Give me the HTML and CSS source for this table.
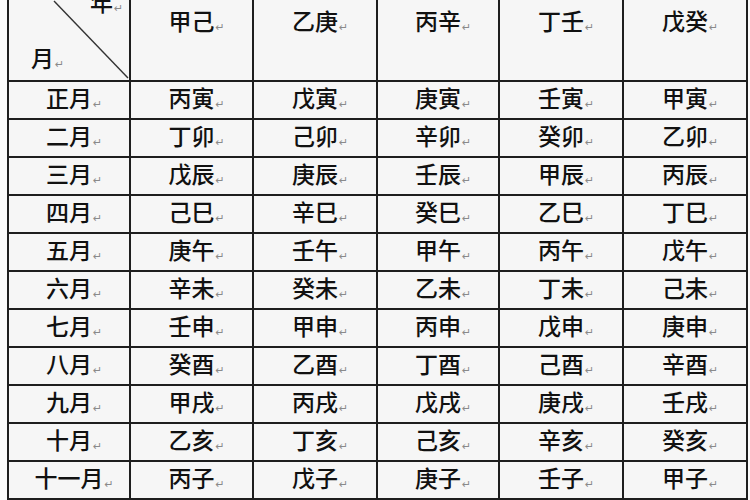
FILE: index.html
```html
<!DOCTYPE html>
<html lang="zh">
<head>
<meta charset="utf-8">
<link rel="stylesheet" href="styles.css">
</head>
<body>
<table class="grid">
  <colgroup>
    <col class="c1"><col class="c2"><col class="c3"><col class="c4"><col class="c5"><col class="c6">
  </colgroup>
  <thead>
    <tr class="head">
      <th class="corner">
        <svg class="diag" viewBox="0 0 122 80" width="122" height="80"><line x1="45" y1="1" x2="119" y2="78" stroke="#333" stroke-width="1.4"/></svg>
        <div class="corner-in">
          <span class="yr">年<span class="pm"><span>↵</span></span></span>
          <span class="mo">月<span class="pm"><span>↵</span></span></span>
        </div>
      </th>
      <th>甲己<span class="pm"><span>↵</span></span></th>
      <th>乙庚<span class="pm"><span>↵</span></span></th>
      <th>丙辛<span class="pm"><span>↵</span></span></th>
      <th>丁壬<span class="pm"><span>↵</span></span></th>
      <th>戊癸<span class="pm"><span>↵</span></span></th>
    </tr>
  </thead>
  <tbody>
    <tr><td>正月<span class="pm"><span>↵</span></span></td><td>丙寅<span class="pm"><span>↵</span></span></td><td>戊寅<span class="pm"><span>↵</span></span></td><td>庚寅<span class="pm"><span>↵</span></span></td><td>壬寅<span class="pm"><span>↵</span></span></td><td>甲寅<span class="pm"><span>↵</span></span></td></tr>
    <tr><td>二月<span class="pm"><span>↵</span></span></td><td>丁卯<span class="pm"><span>↵</span></span></td><td>己卯<span class="pm"><span>↵</span></span></td><td>辛卯<span class="pm"><span>↵</span></span></td><td>癸卯<span class="pm"><span>↵</span></span></td><td>乙卯<span class="pm"><span>↵</span></span></td></tr>
    <tr><td>三月<span class="pm"><span>↵</span></span></td><td>戊辰<span class="pm"><span>↵</span></span></td><td>庚辰<span class="pm"><span>↵</span></span></td><td>壬辰<span class="pm"><span>↵</span></span></td><td>甲辰<span class="pm"><span>↵</span></span></td><td>丙辰<span class="pm"><span>↵</span></span></td></tr>
    <tr><td>四月<span class="pm"><span>↵</span></span></td><td>己巳<span class="pm"><span>↵</span></span></td><td>辛巳<span class="pm"><span>↵</span></span></td><td>癸巳<span class="pm"><span>↵</span></span></td><td>乙巳<span class="pm"><span>↵</span></span></td><td>丁巳<span class="pm"><span>↵</span></span></td></tr>
    <tr><td>五月<span class="pm"><span>↵</span></span></td><td>庚午<span class="pm"><span>↵</span></span></td><td>壬午<span class="pm"><span>↵</span></span></td><td>甲午<span class="pm"><span>↵</span></span></td><td>丙午<span class="pm"><span>↵</span></span></td><td>戊午<span class="pm"><span>↵</span></span></td></tr>
    <tr><td>六月<span class="pm"><span>↵</span></span></td><td>辛未<span class="pm"><span>↵</span></span></td><td>癸未<span class="pm"><span>↵</span></span></td><td>乙未<span class="pm"><span>↵</span></span></td><td>丁未<span class="pm"><span>↵</span></span></td><td>己未<span class="pm"><span>↵</span></span></td></tr>
    <tr><td>七月<span class="pm"><span>↵</span></span></td><td>壬申<span class="pm"><span>↵</span></span></td><td>甲申<span class="pm"><span>↵</span></span></td><td>丙申<span class="pm"><span>↵</span></span></td><td>戊申<span class="pm"><span>↵</span></span></td><td>庚申<span class="pm"><span>↵</span></span></td></tr>
    <tr><td>八月<span class="pm"><span>↵</span></span></td><td>癸酉<span class="pm"><span>↵</span></span></td><td>乙酉<span class="pm"><span>↵</span></span></td><td>丁酉<span class="pm"><span>↵</span></span></td><td>己酉<span class="pm"><span>↵</span></span></td><td>辛酉<span class="pm"><span>↵</span></span></td></tr>
    <tr><td>九月<span class="pm"><span>↵</span></span></td><td>甲戌<span class="pm"><span>↵</span></span></td><td>丙戌<span class="pm"><span>↵</span></span></td><td>戊戌<span class="pm"><span>↵</span></span></td><td>庚戌<span class="pm"><span>↵</span></span></td><td>壬戌<span class="pm"><span>↵</span></span></td></tr>
    <tr><td>十月<span class="pm"><span>↵</span></span></td><td>乙亥<span class="pm"><span>↵</span></span></td><td>丁亥<span class="pm"><span>↵</span></span></td><td>己亥<span class="pm"><span>↵</span></span></td><td>辛亥<span class="pm"><span>↵</span></span></td><td>癸亥<span class="pm"><span>↵</span></span></td></tr>
    <tr><td>十一月<span class="pm"><span>↵</span></span></td><td>丙子<span class="pm"><span>↵</span></span></td><td>戊子<span class="pm"><span>↵</span></span></td><td>庚子<span class="pm"><span>↵</span></span></td><td>壬子<span class="pm"><span>↵</span></span></td><td>甲子<span class="pm"><span>↵</span></span></td></tr>
  </tbody>
</table>
<div class="foot"></div>
</body>
</html>
```
FILE: styles.css
```css
html, body {
  margin: 0;
  padding: 0;
  background: #fbfbfb;
}
body {
  width: 750px;
  height: 500px;
  overflow: hidden;
  font-family: "Noto Sans CJK SC", "Noto Sans CJK JP", sans-serif;
  color: #111;
}
.grid {
  margin: -2px 0 0 7px;
  border-collapse: collapse;
  table-layout: fixed;
  width: 741px;
  background: #f6f6f6;
}
.c1 { width: 122px; }
.c2 { width: 123px; }
.c3 { width: 124px; }
.c4 { width: 122px; }
.c5 { width: 124px; }
.c6 { width: 124px; }
.grid th, .grid td {
  border: 2px solid #1e1e1e;
  padding: 0;
  font-size: 23px;
  font-weight: 500;
  line-height: 28px;
  text-align: center;
  white-space: nowrap;
}
.grid td {
  height: 36px;
}
.head th {
  height: 80px;
  vertical-align: top;
  padding-top: 6px;
  box-sizing: border-box;
}
.head th.corner {
  position: relative;
  padding: 0;
  text-align: left;
}
.diag {
  position: absolute;
  left: 0;
  top: 0;
  overflow: visible;
}
.corner-in {
  height: 80px;
  display: flex;
  flex-direction: column;
  justify-content: space-between;
}
.yr {
  align-self: flex-end;
  margin: -13px 16px 0 0;
}
.mo {
  align-self: flex-start;
  margin: 0 0 2px 22px;
}
.pm {
  display: inline-block;
  width: 0;
  vertical-align: baseline;
}
.pm span {
  display: inline-block;
  font-family: "DejaVu Sans", sans-serif;
  font-size: 11px;
  font-weight: normal;
  color: #8a8a8a;
  margin-left: 1px;
  transform: translateY(1px);
}
.foot {
  height: 10px;
  background: #b9b9b9;
}
```
